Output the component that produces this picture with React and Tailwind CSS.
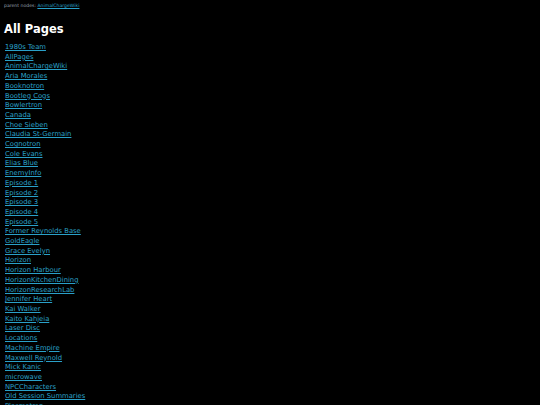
const PAGES = [
  '1980s Team',
  'AllPages',
  'AnimalChargeWiki',
  'Aria Morales',
  'Booknotron',
  'Bootleg Cogs',
  'Bowlertron',
  'Canada',
  'Choe Sieben',
  'Claudia St-Germain',
  'Cognotron',
  'Cole Evans',
  'Elias Blue',
  'EnemyInfo',
  'Episode 1',
  'Episode 2',
  'Episode 3',
  'Episode 4',
  'Episode 5',
  'Former Reynolds Base',
  'GoldEagle',
  'Grace Evelyn',
  'Horizon',
  'Horizon Harbour',
  'HorizonKitchenDining',
  'HorizonResearchLab',
  'Jennifer Heart',
  'Kai Walker',
  'Kaito Kahjeia',
  'Laser Disc',
  'Locations',
  'Machine Empire',
  'Maxwell Reynold',
  'Mick Kanic',
  'microwave',
  'NPCCharacters',
  'Old Session Summaries',
  'Plasmatron',
];

export default function App() {
  return (
    <div className="min-h-screen bg-black text-white font-['DejaVu_Sans',sans-serif] pl-[5px] pt-[3px]">
      <div className="-ml-[1px] text-[4.6px] leading-[6px] text-gray-400">
        parent nodes: <a href="#" className="text-[#2aa0c8] underline">AnimalChargeWiki</a>
      </div>
      <h1 className="-ml-[1px] mt-[14px] text-[11.5px] font-bold leading-[13px]">All Pages</h1>
      <ul className="mt-[7px]">
        {PAGES.map((p) => (
          <li key={p} className="text-[6.8px] leading-[9.7px]">
            <a href="#" className="text-[#2aa0c8] underline">{p}</a>
          </li>
        ))}
      </ul>
    </div>
  );
}
